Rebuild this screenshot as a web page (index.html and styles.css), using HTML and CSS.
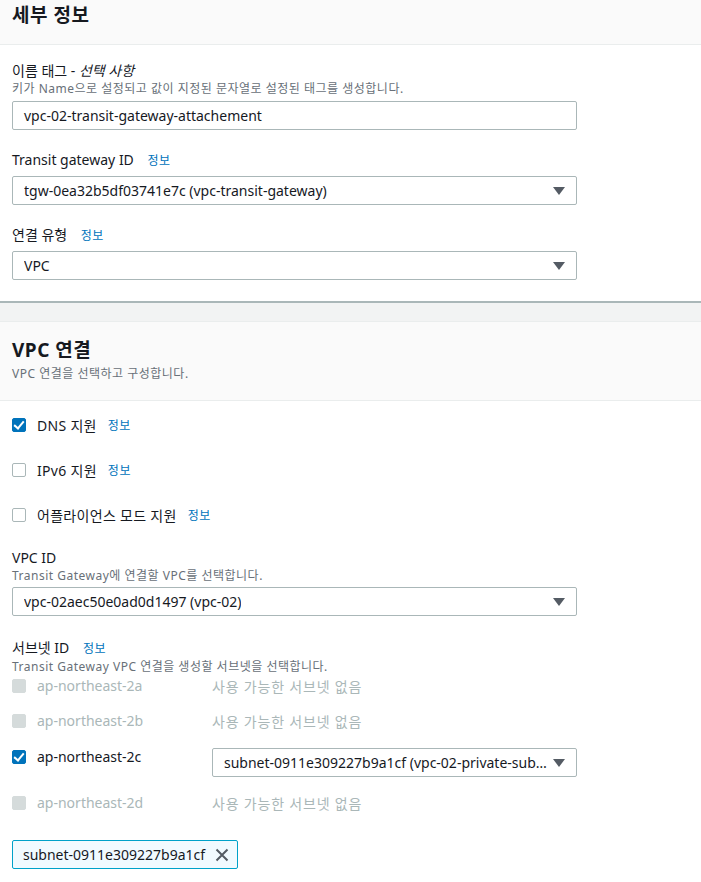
FILE: index.html
```html
<!DOCTYPE html>
<html lang="ko">
<head>
<meta charset="utf-8">
<link rel="stylesheet" href="styles.css">
</head>
<body>
<div class="page">
  <section class="panel">
    <header class="panel-head first">
      <h2 class="title">세부 정보</h2>
    </header>
    <div class="panel-body">
      <div class="field">
        <div class="label">이름 태그 - <i>선택 사항</i></div>
        <div class="desc">키가 Name으로 설정되고 값이 지정된 문자열로 설정된 태그를 생성합니다.</div>
        <div class="input">vpc-02-transit-gateway-attachement</div>
      </div>
      <div class="field">
        <div class="label">Transit gateway ID <a class="info">정보</a></div>
        <div class="select"><span class="val">tgw-0ea32b5df03741e7c (vpc-transit-gateway)</span><span class="caret"></span></div>
      </div>
      <div class="field">
        <div class="label">연결 유형 <a class="info">정보</a></div>
        <div class="select"><span class="val">VPC</span><span class="caret"></span></div>
      </div>
    </div>
  </section>

  <div class="gap"></div>

  <section class="panel">
    <header class="panel-head second">
      <h2 class="title">VPC 연결</h2>
      <div class="desc head-desc">VPC 연결을 선택하고 구성합니다.</div>
    </header>
    <div class="panel-body body2">
      <div class="check-row"><span class="cb checked"></span><span class="cb-label">DNS 지원</span><a class="info">정보</a></div>
      <div class="check-row"><span class="cb"></span><span class="cb-label">IPv6 지원</span><a class="info">정보</a></div>
      <div class="check-row last"><span class="cb"></span><span class="cb-label">어플라이언스 모드 지원</span><a class="info">정보</a></div>

      <div class="field vpcid">
        <div class="label">VPC ID</div>
        <div class="desc">Transit Gateway에 연결할 VPC를 선택합니다.</div>
        <div class="select after-desc"><span class="val">vpc-02aec50e0ad0d1497 (vpc-02)</span><span class="caret"></span></div>
      </div>

      <div class="field subnets">
        <div class="label">서브넷 ID <a class="info">정보</a></div>
        <div class="desc">Transit Gateway VPC 연결을 생성할 서브넷을 선택합니다.</div>
        <div class="az-list">
          <div class="az-row disabled"><span class="az"><span class="cb dis"></span>ap-northeast-2a</span><span class="none">사용 가능한 서브넷 없음</span></div>
          <div class="az-row disabled"><span class="az"><span class="cb dis"></span>ap-northeast-2b</span><span class="none">사용 가능한 서브넷 없음</span></div>
          <div class="az-row active"><span class="az"><span class="cb checked"></span>ap-northeast-2c</span><div class="select sub-select"><span class="val">subnet-0911e309227b9a1cf (vpc-02-private-sub…</span><span class="caret"></span></div></div>
          <div class="az-row disabled"><span class="az"><span class="cb dis"></span>ap-northeast-2d</span><span class="none">사용 가능한 서브넷 없음</span></div>
        </div>
        <div class="token">subnet-0911e309227b9a1cf
          <svg class="x" width="14" height="14" viewBox="0 0 14 14"><path d="M1.5 1.5 L12.5 12.5 M12.5 1.5 L1.5 12.5" stroke="#545b64" stroke-width="2" fill="none"/></svg>
        </div>
      </div>
    </div>
  </section>
</div>
</body>
</html>
```
FILE: styles.css
```css
html, body { margin: 0; padding: 0; background: #fff; }
body {
  font-family: "Noto Sans", "Noto Sans CJK KR", sans-serif;
  color: #16191f;
  font-size: 14px;
}
.page { width: 701px; }
.panel { background: #fff; }
.panel-head {
  background: #fafafa;
  border-bottom: 1px solid #eaeded;
  padding: 0 12px;
}
.panel-head.first { height: 44px; }
.panel-head.second { height: 78px; border-top: 1px solid #eaeded; }
.title {
  margin: 0;
  font-size: 19px;
  font-weight: 700;
  line-height: 22px;
  letter-spacing: 0.5px;
}
.first .title { padding-top: 4px; }
.second .title { padding-top: 17px; }
.head-desc { margin-top: 5px; }
.panel-body { padding: 16px 12px 21px; }
.field { margin-bottom: 20px; width: 565px; }
.field:last-child { margin-bottom: 0; }
.label { font-size: 14px; line-height: 20px; }
.label i { font-style: italic; }
.desc { font-size: 12px; line-height: 16px; color: #687078; letter-spacing: 0.5px; }
.info { color: #0073bb; font-size: 12px; font-weight: 400; margin-left: 10px; letter-spacing: 0.5px; }
.input, .select {
  box-sizing: border-box;
  height: 29px;
  border: 1px solid #aab7b8;
  border-radius: 2px;
  padding: 0 11px;
  display: flex;
  align-items: center;
  font-size: 14px;
  background: #fff;
  margin-top: 4px;
}
.select { justify-content: space-between; margin-top: 5px; }
.select.after-desc { margin-top: 3px; }
.val { white-space: nowrap; overflow: hidden; }
.caret {
  flex: none;
  width: 0; height: 0;
  border-left: 6px solid transparent;
  border-right: 6px solid transparent;
  border-top: 8px solid #545b64;
  margin-left: 6px;
}
.gap {
  height: 18px;
  background: #f2f3f3;
  border-top: 2px solid #aab7b8;
}
.body2 { padding-top: 15px; }
.check-row {
  display: flex;
  align-items: center;
  height: 18px;
  margin-bottom: 27px;
}
.check-row.last { margin-bottom: 24px; }
.cb {
  flex: none;
  box-sizing: border-box;
  width: 14px; height: 14px;
  border: 1px solid #aab7b8;
  border-radius: 2px;
  background: #fff;
  margin-right: 11px;
  position: relative;
}
.cb.checked { background: #0073bb; border-color: #0073bb; }
.cb.checked::after {
  content: "";
  position: absolute;
  left: 3px; top: 0px;
  width: 4px; height: 8px;
  border-right: 2px solid #fff;
  border-bottom: 2px solid #fff;
  transform: rotate(40deg);
}
.cb.dis { background: #d5dbdb; border-color: #d5dbdb; }
.cb-label { font-size: 14px; letter-spacing: 0.3px; }
.check-row .info { margin-left: 11px; }
.vpcid { margin-top: 0; }
.subnets { margin-top: 22px; }
.az-list { margin-top: -7px; }
.az-row { display: flex; align-items: center; height: 35px; }
.az-row.active { height: 47px; align-items: flex-start; }
.az { flex: none; display: flex; align-items: center; width: 200px; }
.disabled .az, .none { color: #aab7b8; }
.none { letter-spacing: 0.8px; }
.sub-select { flex: 1; min-width: 0; margin-top: 10px; }
.active .az { padding-top: 9px; }
.token {
  display: inline-flex;
  align-items: center;
  box-sizing: border-box;
  height: 29px;
  margin-top: 20px;
  padding: 0 8px 0 10px;
  background: #f1faff;
  border: 1px solid #00a1c9;
  border-radius: 2px;
  font-size: 14px;
}
.token .x { margin-left: 10px; }
```
